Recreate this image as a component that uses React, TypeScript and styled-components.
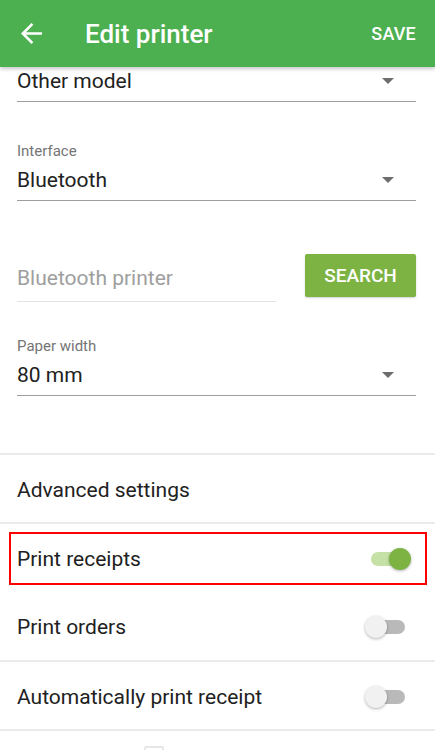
import React from "react";
import styled, { createGlobalStyle } from "styled-components";

const Global = createGlobalStyle`
  html, body { margin: 0; padding: 0; background: #fff; }
  body { font-family: Roboto, "Noto Sans", sans-serif; overflow: hidden; }
  #root { height: 750px; overflow: hidden; }
`;

const Page = styled.div`
  position: relative;
  width: 435px;
  height: 750px;
  overflow: hidden;
  background: #fff;
`;

const AppBar = styled.header`
  position: relative;
  z-index: 2;
  height: 67px;
  background: #4caf50;
  display: flex;
  align-items: center;
  padding: 0 19px 0 21px;
  box-shadow: 0 2px 4px rgba(0, 0, 0, 0.22);
  color: #fff;
`;

const BackButton = styled.div`
  width: 21px;
  height: 21px;
  display: flex;
  align-items: center;
  justify-content: center;
`;

const Title = styled.h1`
  margin: 0 0 0 43px;
  flex: 1;
  font-size: 26px;
  font-weight: 500;
  line-height: 30px;
`;

const Action = styled.span`
  font-size: 18px;
  font-weight: 500;
  letter-spacing: 0.2px;
`;

const Form = styled.div`
  padding: 0 19px 0 17px;
  display: flex;
  flex-direction: column;
`;

const Field = styled.div<{ $top: number }>`
  margin-top: ${(p) => p.$top}px;
  display: flex;
  flex-direction: column;
`;

const Label = styled.div`
  font-size: 15px;
  line-height: 16px;
  color: #757575;
  margin-bottom: 7px;
`;

const Select = styled.div`
  display: flex;
  align-items: center;
  justify-content: space-between;
  height: 28px;
  padding-bottom: 6px;
  border-bottom: 1px solid #9e9e9e;
`;

const Value = styled.span`
  font-size: 21px;
  line-height: 28px;
  color: #212121;
`;

const Caret = styled.span`
  width: 0;
  height: 0;
  border-left: 6px solid transparent;
  border-right: 6px solid transparent;
  border-top: 6px solid #6d6d6d;
  margin-right: 22px;
`;

const SearchRow = styled.div`
  margin-top: 53px;
  display: flex;
  align-items: flex-start;
  justify-content: space-between;
`;

const TextInput = styled.div`
  width: 259px;
  margin-top: 10px;
  padding-bottom: 9px;
  border-bottom: 1px solid #e3e3e3;
  font-size: 21px;
  line-height: 28px;
  color: #9e9e9e;
`;

const SearchButton = styled.button`
  width: 111px;
  height: 43px;
  border: none;
  border-radius: 2px;
  background: #7cb342;
  color: #fff;
  font-family: Roboto, sans-serif;
  font-size: 19px;
  font-weight: 500;
  box-shadow: 0 1px 2px rgba(0, 0, 0, 0.18);
  padding: 0;
`;

const Divider = styled.div<{ $top?: number }>`
  margin-top: ${(p) => p.$top ?? 0}px;
  height: 2px;
  background: #ebebeb;
`;

const Row = styled.div<{ $highlight?: boolean }>`
  position: relative;
  height: 68px;
  display: flex;
  align-items: center;
  justify-content: space-between;
  padding: 2px 30px 0 17px;
  box-sizing: border-box;
  font-size: 21px;
  color: #212121;
  ${(p) =>
    p.$highlight &&
    `&::after {
      content: "";
      position: absolute;
      left: 9px;
      right: 8px;
      top: 8px;
      bottom: 7px;
      border: 2px solid #ff0000;
    }`}
`;

const RowFirst = styled(Row)`
  height: 67px;
`;

const Track = styled.div<{ $on: boolean }>`
  position: relative;
  width: 34px;
  height: 14px;
  border-radius: 7px;
  background: ${(p) => (p.$on ? "#c5e1a5" : "#b9b9b9")};
`;

const Thumb = styled.div<{ $on: boolean }>`
  position: absolute;
  top: -4px;
  left: ${(p) => (p.$on ? "18px" : "-6px")};
  width: 22px;
  height: 22px;
  border-radius: 50%;
  background: ${(p) => (p.$on ? "#7cb342" : "#f1f1f1")};
  box-shadow: 0 1px 3px rgba(0, 0, 0, 0.3);
`;

const Peek = styled.div`
  height: 20px;
  position: relative;
`;

const PeekBox = styled.div`
  position: absolute;
  left: 144px;
  top: 15px;
  width: 16px;
  height: 16px;
  border: 2px solid #e6e6e6;
  border-radius: 2px;
`;

const Switch = ({ on }: { on: boolean }) => (
  <Track $on={on}>
    <Thumb $on={on} />
  </Track>
);

export default function App() {
  return (
    <Page>
      <Global />
      <AppBar>
        <BackButton>
          <svg width="21" height="21" viewBox="4 4 16 16" fill="#fff">
            <path d="M20 11H7.83l5.59-5.59L12 4l-8 8 8 8 1.41-1.41L7.83 13H20v-2z" />
          </svg>
        </BackButton>
        <Title>Edit printer</Title>
        <Action>SAVE</Action>
      </AppBar>
      <Form>
        <Field $top={0}>
          <Select>
            <Value>Other model</Value>
            <Caret />
          </Select>
        </Field>
        <Field $top={41}>
          <Label>Interface</Label>
          <Select>
            <Value>Bluetooth</Value>
            <Caret />
          </Select>
        </Field>
        <SearchRow>
          <TextInput>Bluetooth printer</TextInput>
          <SearchButton>SEARCH</SearchButton>
        </SearchRow>
        <Field $top={36}>
          <Label>Paper width</Label>
          <Select>
            <Value>80 mm</Value>
            <Caret />
          </Select>
        </Field>
      </Form>
      <Divider $top={57} />
      <RowFirst>Advanced settings</RowFirst>
      <Divider />
      <Row $highlight>
        Print receipts
        <Switch on />
      </Row>
      <Row>
        Print orders
        <Switch on={false} />
      </Row>
      <Divider />
      <RowFirst>
        Automatically print receipt
        <Switch on={false} />
      </RowFirst>
      <Divider />
      <Peek>
        <PeekBox />
      </Peek>
    </Page>
  );
}
